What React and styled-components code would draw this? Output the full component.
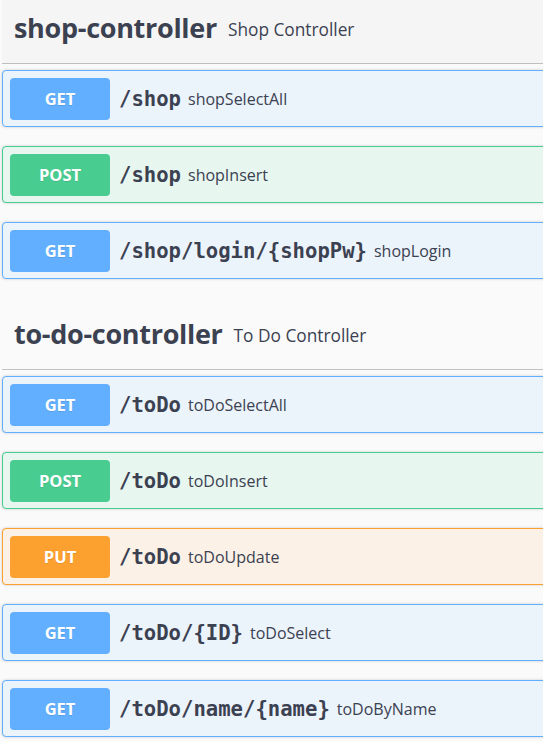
import React from "react";
import styled, { createGlobalStyle } from "styled-components";

const GlobalStyle = createGlobalStyle`
	html, body {
		margin: 0;
		padding: 0;
		background: #fafafa;
		overflow: hidden;
	}
	body {
		font-family: "Open Sans", sans-serif;
		color: #3b4151;
	}
`;

const METHODS = {
	get: { main: "#61affe", bg: "#ebf3fb" },
	post: { main: "#49cc90", bg: "#e8f6f0" },
	put: { main: "#fca130", bg: "#fbf1e6" },
};

const Page = styled.div`
	width: 580px;
	margin-top: -8px;
	padding-left: 2px;
	display: flex;
	flex-direction: column;
`;

const Section = styled.section`
	display: flex;
	flex-direction: column;
`;

const TagHeader = styled.h3`
	box-sizing: border-box;
	height: 72px;
	margin: 0 0 6px;
	padding: 0 12px;
	display: flex;
	align-items: center;
	gap: 11px;
	border-bottom: 1px solid rgba(59, 65, 81, 0.3);
	background: ${(p) => (p.$hover ? "rgba(0, 0, 0, 0.02)" : "transparent")};
`;

const TagName = styled.span`
	font-family: "Open Sans", sans-serif;
	font-weight: 700;
	font-size: 27px;
	letter-spacing: -0.3px;
	color: #3b4151;
`;

const TagDescription = styled.small`
	font-family: "Open Sans", sans-serif;
	font-size: 17.3px;
	font-weight: 400;
	color: #3b4151;
	padding-top: 3px;
`;

const OpBlock = styled.div`
	box-sizing: border-box;
	height: 57px;
	margin-bottom: 19px;
	padding: 0 7px;
	display: flex;
	align-items: center;
	border: 1px solid ${(p) => METHODS[p.$method].main};
	border-radius: 4px;
	background: ${(p) => METHODS[p.$method].bg};
	box-shadow: 0 0 3px rgba(0, 0, 0, 0.19);
`;

const Method = styled.span`
	box-sizing: border-box;
	width: 100px;
	height: 42px;
	display: flex;
	align-items: center;
	justify-content: center;
	border-radius: 4px;
	background: ${(p) => METHODS[p.$method].main};
	color: #fff;
	font-family: "Open Sans", sans-serif;
	font-weight: 700;
	font-size: 16.5px;
	text-shadow: 0 1px 0 rgba(0, 0, 0, 0.1);
`;

const Path = styled.span`
	padding: 0 7px 0 9px;
	font-family: "DejaVu Sans Mono", monospace;
	font-weight: 700;
	font-size: 20.6px;
	color: #3b4151;
`;

const Summary = styled.span`
	font-family: "Open Sans", sans-serif;
	font-size: 16px;
	color: #3b4151;
`;

const sections = [
	{
		name: "shop-controller",
		description: "Shop Controller",
		hover: true,
		ops: [
			{ method: "get", path: "/shop", summary: "shopSelectAll" },
			{ method: "post", path: "/shop", summary: "shopInsert" },
			{ method: "get", path: "/shop/login/{shopPw}", summary: "shopLogin" },
		],
	},
	{
		name: "to-do-controller",
		description: "To Do Controller",
		ops: [
			{ method: "get", path: "/toDo", summary: "toDoSelectAll" },
			{ method: "post", path: "/toDo", summary: "toDoInsert" },
			{ method: "put", path: "/toDo", summary: "toDoUpdate" },
			{ method: "get", path: "/toDo/{ID}", summary: "toDoSelect" },
			{ method: "get", path: "/toDo/name/{name}", summary: "toDoByName" },
		],
	},
];

export default function App() {
	return (
		<Page>
			<GlobalStyle />
			{sections.map((section) => (
				<Section key={section.name}>
					<TagHeader $hover={section.hover}>
						<TagName>{section.name}</TagName>
						<TagDescription>{section.description}</TagDescription>
					</TagHeader>
					{section.ops.map((op, i) => (
						<OpBlock key={i} $method={op.method}>
							<Method $method={op.method}>{op.method.toUpperCase()}</Method>
							<Path>{op.path}</Path>
							<Summary>{op.summary}</Summary>
						</OpBlock>
					))}
				</Section>
			))}
		</Page>
	);
}
